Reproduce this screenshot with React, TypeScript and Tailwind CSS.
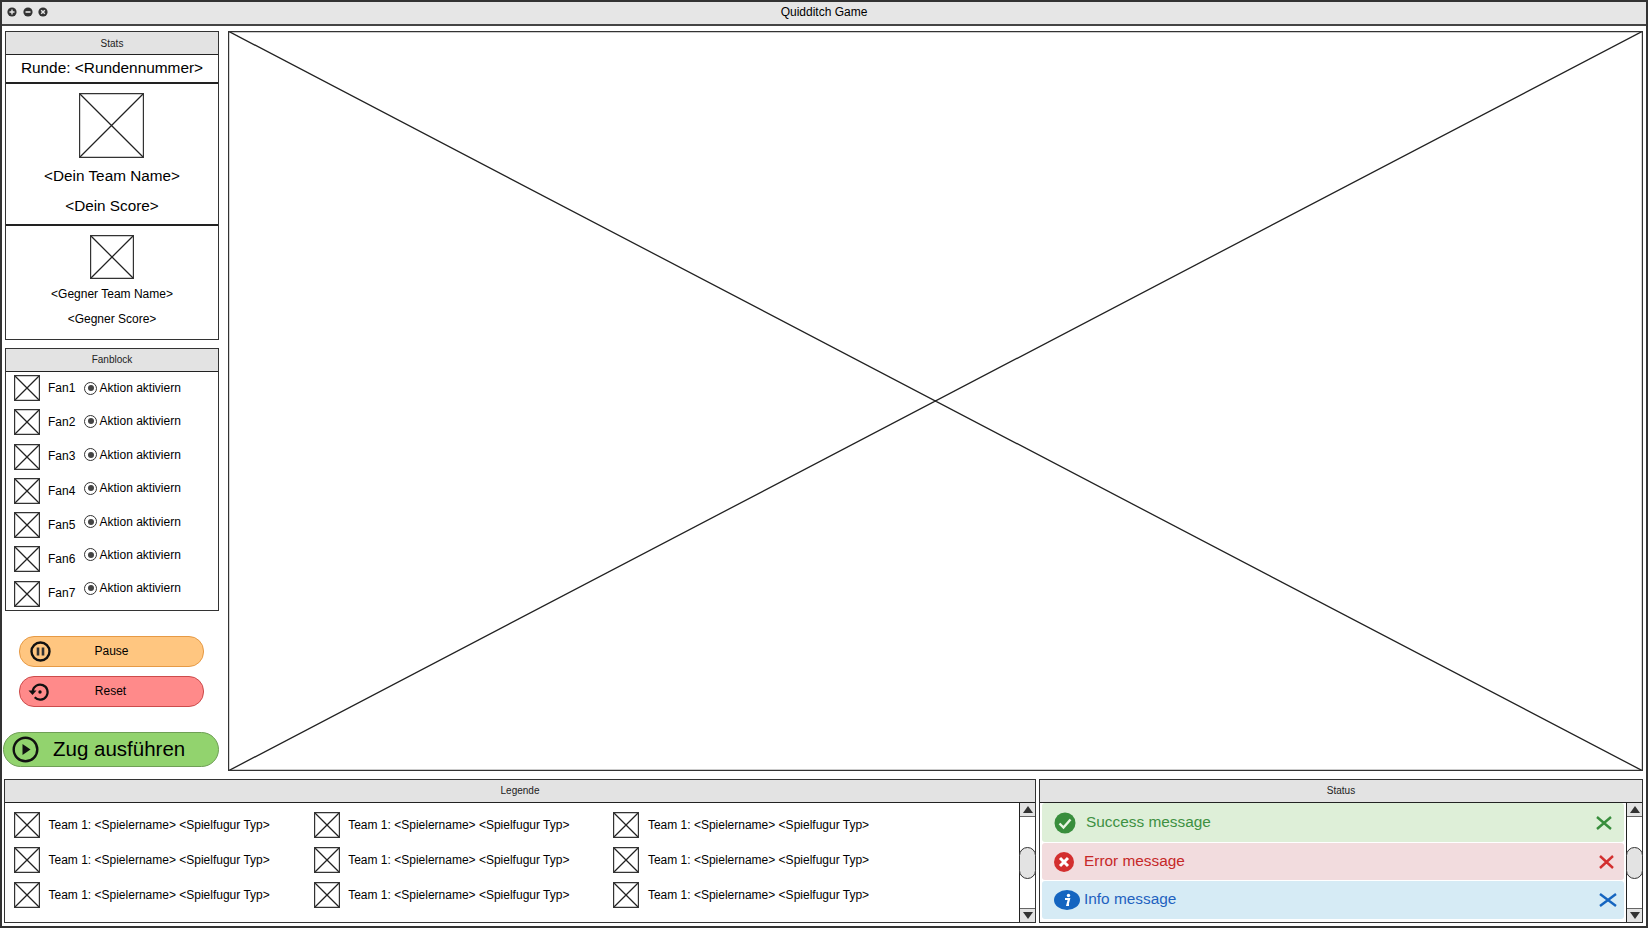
import React from 'react';

const fans = ['Fan1', 'Fan2', 'Fan3', 'Fan4', 'Fan5', 'Fan6', 'Fan7'];
const legend = [0, 1, 2];

const XBox = ({ className = '' }: { className?: string }) => (
  <svg className={`block shrink-0 ${className}`} viewBox="0 0 100 100" preserveAspectRatio="none">
    <rect x="0" y="0" width="100" height="100" fill="#fff" stroke="none" />
    <path d="M0 0L100 100M100 0L0 100" stroke="#222" strokeWidth="1.3" fill="none" vectorEffect="non-scaling-stroke" />
    <rect x="0" y="0" width="100" height="100" fill="none" stroke="#333" strokeWidth="2.4" vectorEffect="non-scaling-stroke" />
  </svg>
);

const PanelHead = ({ title, className = '' }: { title: string; className?: string }) => (
  <div className={`h-[23px] shrink-0 bg-[#e3e3e3] border-b border-[#222] flex items-center justify-center text-[10px] text-[#222] ${className}`}>
    {title}
  </div>
);

const Radio = () => (
  <span className="w-[13px] h-[13px] rounded-full border border-[#333] bg-white flex items-center justify-center shrink-0">
    <span className="w-[6px] h-[6px] rounded-full bg-[#444]" />
  </span>
);

const ScrollBar = () => (
  <div className="w-[16px] shrink-0 border-l border-[#222] flex flex-col justify-between bg-white relative">
    <div className="h-[14px] bg-[#e3e3e3] border-b border-[#666] flex items-center justify-center">
      <span className="w-0 h-0 border-x-[5px] border-x-transparent border-b-[7px] border-b-[#333]" />
    </div>
    <div className="absolute left-[-1px] top-[44px] w-[17px] h-[32px] bg-[#e3e3e3] border border-[#333] rounded-[9px]" />
    <div className="h-[14px] bg-[#e3e3e3] border-t border-[#666] flex items-center justify-center">
      <span className="w-0 h-0 border-x-[5px] border-x-transparent border-t-[7px] border-t-[#333]" />
    </div>
  </div>
);

const Cross = ({ color, w, h }: { color: string; w: number; h: number }) => (
  <svg width={w} height={h} viewBox={`0 0 ${w} ${h}`}>
    <path d={`M1 1L${w - 1} ${h - 1}M${w - 1} 1L1 ${h - 1}`} stroke={color} strokeWidth="2.4" fill="none" />
  </svg>
);

interface MessageProps {
  bg: string;
  color: string;
  icon: React.ReactNode;
  text: string;
  gap: string;
  close: React.ReactNode;
  closePad: string;
  h: string;
}

const Message = ({ bg, color, icon, text, gap, close, closePad, h }: MessageProps) => (
  <div className={`${bg} ${h} rounded-[3px] flex items-center pl-[12px] shrink-0`}>
    <span className="w-[26px] flex justify-start shrink-0">{icon}</span>
    <span className={`${gap} ${color} text-[15.4px] flex-1 pb-[2px]`}>{text}</span>
    <span className={`${closePad} flex shrink-0`}>{close}</span>
  </div>
);

const App: React.FC = () => {
  return (
    <div className="w-[1648px] h-[928px] bg-white flex flex-col border-2 border-[#333] overflow-hidden text-black font-['Liberation_Sans',Arial,sans-serif]">
      {/* title bar */}
      <div className="h-[24px] shrink-0 bg-[#e6e6e6] border-b-2 border-[#444] relative flex items-center justify-center text-[12px] pb-[2px]">
        <div className="absolute left-[5px] top-[5px] flex gap-[5.5px]">
          <svg width="10" height="10" viewBox="0 0 10 10"><circle cx="5" cy="5" r="4.6" fill="#333" /><path d="M2.5 5h5M5 2.5v5" stroke="#e6e6e6" strokeWidth="1.4" /></svg>
          <svg width="10" height="10" viewBox="0 0 10 10"><circle cx="5" cy="5" r="4.6" fill="#333" /><path d="M2.5 5h5" stroke="#e6e6e6" strokeWidth="1.6" /></svg>
          <svg width="10" height="10" viewBox="0 0 10 10"><circle cx="5" cy="5" r="4.6" fill="#333" /><path d="M3.2 3.2l3.6 3.6M6.8 3.2l-3.6 3.6" stroke="#e6e6e6" strokeWidth="1.4" /></svg>
        </div>
        Quidditch Game
      </div>

      <div className="flex-1 flex flex-col min-h-0 pt-[5px] px-[2px]">
        <div className="flex gap-[9px] h-[740px] shrink-0">
          {/* left column */}
          <div className="w-[215px] shrink-0 flex flex-col">
            <div className="ml-[1px] w-[214px] h-[309px] border border-[#333] flex flex-col shrink-0">
              <PanelHead title="Stats" />
              <div className="h-[29px] border-b-2 border-[#222] flex items-center justify-center text-[15.4px] pb-[2px]">Runde: &lt;Rundennummer&gt;</div>
              <div className="h-[142px] border-b-2 border-[#222] flex flex-col items-center pt-[9px]">
                <XBox className="w-[65px] h-[65px] mr-[1px]" />
                <div className="mt-[8px] text-[15.3px] leading-[20px]">&lt;Dein Team Name&gt;</div>
                <div className="mt-[10px] text-[15.3px] leading-[20px]">&lt;Dein Score&gt;</div>
              </div>
              <div className="flex-1 flex flex-col items-center pt-[9px]">
                <XBox className="w-[44px] h-[44px]" />
                <div className="mt-[8px] text-[12px] leading-[15px]">&lt;Gegner Team Name&gt;</div>
                <div className="mt-[10px] text-[12px] leading-[15px]">&lt;Gegner Score&gt;</div>
              </div>
            </div>

            <div className="ml-[1px] mt-[8px] w-[214px] h-[263px] border border-[#333] flex flex-col shrink-0">
              <PanelHead title="Fanblock" className="pb-[1px]" />
              <div className="flex pl-[8px] pt-[3px]">
                <div className="flex flex-col gap-[8.3px] w-[70px]">
                  {fans.map((fan, i) => (
                    <div key={fan} className="flex items-center gap-[8px]">
                      <XBox className="w-[26px] h-[26px]" />
                      <span className={`text-[12px] ${i === 6 || i === 2 ? 'pb-[2px]' : ''}`}>{fan}</span>
                    </div>
                  ))}
                </div>
                <div className="flex flex-col gap-[18.4px] pt-[5.5px]">
                  {fans.map(fan => (
                    <div key={fan} className="h-[15px] flex items-center gap-[2.5px] text-[12px]">
                      <Radio />
                      <span>Aktion aktiviern</span>
                    </div>
                  ))}
                </div>
              </div>
            </div>

            <div className="ml-[15px] mt-[25px] w-[185px] h-[31px] rounded-[15px] bg-[#ffc680] border border-[#e69a45] relative flex items-center justify-center text-[12px] shrink-0">
              <svg className="absolute left-[10px] top-[4px]" width="21" height="21" viewBox="0 0 21 21">
                <circle cx="10.5" cy="10.5" r="9" fill="none" stroke="#111" strokeWidth="2.4" />
                <path d="M8 6.5v8M13 6.5v8" stroke="#333" strokeWidth="2.6" />
              </svg>
              <span className="pb-[1px]">Pause</span>
            </div>
            <div className="ml-[15px] mt-[9px] w-[185px] h-[31px] rounded-[15px] bg-[#ff8a8a] border border-[#cc4b4b] relative flex items-center justify-center text-[12px] shrink-0">
              <svg className="absolute left-[8px] top-[4px]" width="22" height="22" viewBox="0 0 22 22">
                <path d="M4.7 10A7.5 7.5 0 1 1 6.7 16.3" fill="none" stroke="#111" strokeWidth="2.2" />
                <path d="M0.5 9.5h8L4.5 14z" fill="#111" />
                <circle cx="12" cy="11" r="1.7" fill="#111" />
              </svg>
              <span className="pb-[2px] pr-[2px]">Reset</span>
            </div>
            <div className="-ml-[1px] mt-[25px] w-[216px] h-[35px] rounded-[18px] bg-[#92d36e] border border-[#6f9f56] relative flex items-center pl-[49px] text-[20.5px] shrink-0">
              <svg className="absolute left-[8px] top-[3px]" width="27" height="27" viewBox="0 0 27 27">
                <circle cx="13.5" cy="13.5" r="11.8" fill="none" stroke="#111" strokeWidth="2.4" />
                <path d="M10.5 8l8 5.5-8 5.5z" fill="#111" />
              </svg>
              <span>Zug ausführen</span>
            </div>
          </div>

          {/* game field */}
          <XBox className="w-[1415px] h-[740px]" />
        </div>

        {/* bottom row */}
        <div className="mt-[8px] mr-[1px] flex gap-[3px] h-[144px] shrink-0">
          <div className="w-[1032px] border border-[#333] flex flex-col shrink-0">
            <PanelHead title="Legende" className="pb-[2px]" />
            <div className="flex-1 flex min-h-0">
              <div className="flex-1 pl-[9px] pt-[9px] grid grid-cols-[299.7px_299.7px_299.7px] grid-rows-[26px_26px_26px] gap-y-[9px]">
                {legend.map(r =>
                  legend.map(c => (
                    <div key={`${r}-${c}`} className="flex items-center gap-[8.5px] text-[12px]">
                      <XBox className="w-[26px] h-[26px]" />
                      <span>Team 1: &lt;Spielername&gt; &lt;Spielfugur Typ&gt;</span>
                    </div>
                  ))
                )}
              </div>
              <ScrollBar />
            </div>
          </div>

          <div className="flex-1 border border-[#333] flex flex-col min-w-0">
            <PanelHead title="Status" className="pb-[2px]" />
            <div className="flex-1 flex min-h-0">
              <div className="flex-1 flex flex-col gap-[1px] px-[2px] pt-0">
                <Message
                  h="h-[39px]"
                  bg="bg-[#deefd8]"
                  color="text-[#3d9142]"
                  gap="pl-[6px]"
                  text="Success message"
                  closePad="pr-[12px]"
                  close={<Cross color="#388e3c" w={16} h={14} />}
                  icon={
                    <svg width="22" height="22" viewBox="0 0 22 22">
                      <circle cx="11" cy="11" r="10.5" fill="#388e3c" />
                      <path d="M5.5 11.5l4 4 7-8" fill="none" stroke="#e8f5e3" strokeWidth="2.4" />
                    </svg>
                  }
                />
                <Message
                  h="h-[37px]"
                  bg="bg-[#f2dcde]"
                  color="text-[#c62828]"
                  gap="pl-[4px]"
                  text="Error message"
                  closePad="pr-[10px]"
                  close={<Cross color="#d32f2f" w={15} h={14} />}
                  icon={
                    <svg width="20" height="20" viewBox="0 0 20 20">
                      <circle cx="10" cy="10" r="10" fill="#d32f2f" />
                      <path d="M6 6l8 8M14 6l-8 8" stroke="#fff" strokeWidth="3" />
                    </svg>
                  }
                />
                <Message
                  h="h-[38px]"
                  bg="bg-[#d6ebf5]"
                  color="text-[#1f62c0]"
                  gap="pl-[4px]"
                  text="Info message"
                  closePad="pr-[7px]"
                  close={<Cross color="#1565c0" w={18} h={14} />}
                  icon={
                    <svg width="26" height="20" viewBox="0 0 26 20">
                      <ellipse cx="13" cy="10" rx="13" ry="10" fill="#1565c0" />
                      <circle cx="14.5" cy="5.5" r="1.7" fill="#fff" />
                      <path d="M11 9h4l-1.6 6h1.6" fill="none" stroke="#fff" strokeWidth="2.2" />
                    </svg>
                  }
                />
              </div>
              <ScrollBar />
            </div>
          </div>
        </div>
      </div>
    </div>
  );
};

export default App;
